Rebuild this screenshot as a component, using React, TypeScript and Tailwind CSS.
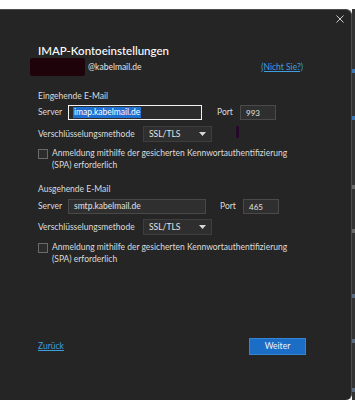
import React from "react";

const font = { fontFamily: 'Lato, "Noto Sans", Arial, sans-serif' };

function Caret() {
  return (
    <svg width="7" height="4" viewBox="0 0 7 4" className="shrink-0">
      <path d="M0 0h7L3.5 4z" fill="#d8d8d8" />
    </svg>
  );
}

function Select({ mt }: { mt: string }) {
  return (
    <div className={`flex h-[16px] items-center ${mt}`}>
      <span className="w-[105px] text-[8.5px] text-[#dcdcdc]">Verschlüsselungsmethode</span>
      <div className="flex h-[16px] w-[69px] items-center justify-between border border-[#3e3e3e] bg-[#2e2e2e] pl-[5px] pr-[5px]">
        <span className="text-[8.5px] text-[#e6e6e6]">SSL/TLS</span>
        <Caret />
      </div>
    </div>
  );
}

function SpaCheck({ mt }: { mt: string }) {
  return (
    <div className={`flex items-start ${mt}`}>
      <div className="mt-[2px] h-[10px] w-[10px] shrink-0 border border-[#6a6a6a] bg-[#2c2c2c]" />
      <p className="ml-[4px] text-[8.5px] leading-[12px] text-[#dcdcdc]">
        Anmeldung mithilfe der gesicherten Kennwortauthentifizierung
        <br />
        (SPA) erforderlich
      </p>
    </div>
  );
}

export default function App() {
  return (
    <div className="flex h-[400px] w-[355px] flex-col overflow-hidden bg-white" style={font}>
      <div className="h-[9px] shrink-0 bg-white" />
      <div className="flex flex-1">
        <div className="flex h-[391px] w-[352px] flex-col rounded-r-[6px] border-r border-t border-[#4d4d4d] bg-[#252525]">
          <div className="flex h-[17px] items-center justify-end pr-[7px]">
            <svg width="8" height="8" viewBox="0 0 8 8">
              <path d="M0.5 0.5l7 7M7.5 0.5l-7 7" stroke="#cfcfcf" strokeWidth="1" />
            </svg>
          </div>

          <div className="pl-[38px]">
            <h1 className="mt-[16px] h-[16px] text-[11.5px] font-medium leading-[16px] text-white">IMAP-Kontoeinstellungen</h1>

            <div className="ml-[-8px] flex h-[16px] items-center pr-[48px]">
              <div className="h-[18px] w-[55px] shrink-0 rounded-[2px] bg-[#1e030a]" />
              <span className="ml-[3px] text-[8.5px] text-[#e4e4e4]">@kabelmail.de</span>
              <span className="ml-auto text-[8.5px] text-[#3d9ee0] underline">(Nicht Sie?)</span>
            </div>

            <div className="mt-[15px] h-[12px] text-[8.5px] leading-[12px] text-[#dcdcdc]">Eingehende E-Mail</div>
            <div className="mt-[3px] flex h-[15px] items-center">
              <span className="w-[30px] text-[8.5px] text-[#dcdcdc]">Server</span>
              <div className="flex h-[15px] w-[134px] items-center border-[1.5px] border-[#f2f2f2] bg-[#2b2b2b] pl-[4px]">
                <span className="bg-[#1f6fd0] px-[1px] text-[8.5px] leading-[11px] text-white">imap.kabelmail.de</span>
              </div>
              <span className="ml-[15px] w-[23px] text-[8.5px] text-[#dcdcdc]">Port</span>
              <div className="flex h-[15px] w-[36px] items-center border border-[#4a4a4a] bg-[#2f2f2f] pl-[5px] text-[8px] text-[#e0e0e0]">
                993
              </div>
            </div>
            <div className="relative">
              <Select mt="mt-[6px]" />
              <div className="absolute left-[198px] top-0 h-[12px] w-[3px] bg-[#26082a]" />
            </div>
            <SpaCheck mt="mt-[5px]" />

            <div className="mt-[12px] h-[12px] text-[8.5px] leading-[12px] text-[#dcdcdc]">Ausgehende E-Mail</div>
            <div className="mt-[4px] flex h-[15px] items-center">
              <span className="w-[30px] text-[8.5px] text-[#dcdcdc]">Server</span>
              <div className="flex h-[15px] w-[138px] items-center border border-[#484848] bg-[#2f2f2f] pl-[5px] text-[8.5px] text-[#e0e0e0]">
                smtp.kabelmail.de
              </div>
              <span className="ml-[14px] w-[23px] text-[8.5px] text-[#dcdcdc]">Port</span>
              <div className="flex h-[15px] w-[36px] items-center border border-[#4a4a4a] bg-[#2f2f2f] pl-[5px] text-[8px] text-[#e0e0e0]">
                465
              </div>
            </div>
            <Select mt="mt-[5px]" />
            <SpaCheck mt="mt-[6px]" />

            <div className="mt-[73px] flex h-[17px] items-center pr-[45px]">
              <span className="text-[8.5px] text-[#3d9ee0] underline">Zurück</span>
              <button className="ml-auto h-[17px] w-[57px] border border-[#3584d6] bg-[#1b6dc6] text-[8.5px] text-[#eef4fb]">
                Weiter
              </button>
            </div>
          </div>
        </div>

        <div className="flex w-[3px] flex-col bg-[#333333]">
          <div className="mt-[60px] h-[4px] bg-[#3a78b8]" />
          <div className="mt-[43px] h-[4px] bg-[#3a78b8]" />
          <div className="mt-[65px] h-[4px] bg-[#6a6a6a]" />
          <div className="mt-[40px] h-[4px] bg-[#6a6a6a]" />
          <div className="mt-[61px] h-[4px] bg-[#5a6a80]" />
          <div className="mt-[41px] h-[4px] bg-[#5a6a80]" />
          <div className="mt-[45px] h-[4px] bg-[#5a6a80]" />
        </div>
      </div>
    </div>
  );
}
